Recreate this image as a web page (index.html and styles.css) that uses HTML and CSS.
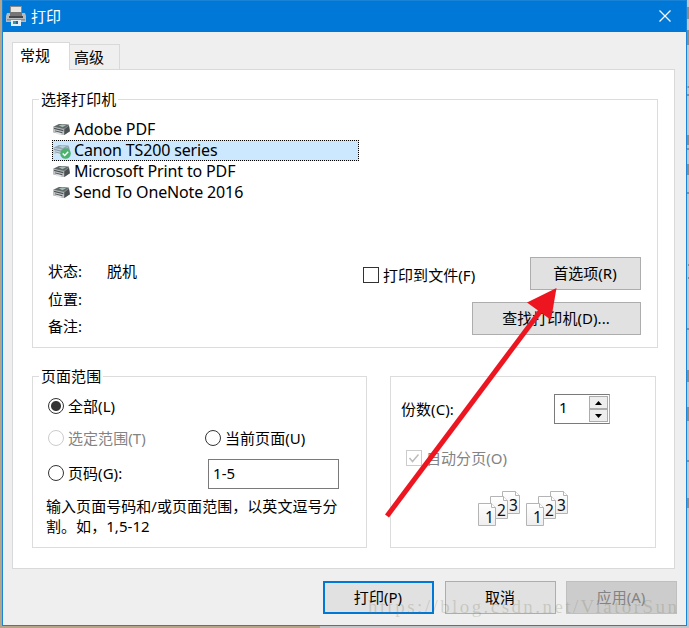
FILE: index.html
```html
<!DOCTYPE html>
<html lang="zh-CN">
<head>
<meta charset="utf-8">
<title>打印</title>
<link rel="stylesheet" href="styles.css">
</head>
<body>
<svg width="0" height="0" class="defs" aria-hidden="true">
  <defs>
    <linearGradient id="paper" x1="0" y1="0" x2="0" y2="1"><stop offset="0" stop-color="#fff"/><stop offset="1" stop-color="#eee"/></linearGradient>
    <symbol id="printer" viewBox="0 0 18 14">
      <path d="M0 4 6 1l11 1 1 7-6 4-8-2-4-1z" fill="#8b9193"/>
      <path d="m1 4 6-3 10 1-5 4z" fill="#5f6768"/>
      <path d="m6 2.500 4-1 4 1-4 2z" fill="#a5bdb0"/>
      <path d="m0 4 12 3v6l-5-1-3-1-4-1z" fill="#c0c4c6"/>
      <path d="m12 7 5-4 1 6-6 4z" fill="#4b5153"/>
      <path d="m1 5 10 2.500V9L1 6.500zM2 8l8 2v1L2 9z" fill="#4b5053"/>
      <path d="m3 10 6 1-1 2-5-1.500z" fill="#e4e6e7"/>
    </symbol>
    <symbol id="sheets" viewBox="0 0 44 38">
      <g fill="url(#paper)" stroke="#b4b4b4">
        <path d="M24.500 1.500h13l4 4v18h-17z"/><path d="M37.500 1.500v4h4" fill="#fff"/>
        <path d="M12.500 6.500h13l4 4v18h-17z"/><path d="M25.500 6.500v4h4" fill="#fff"/>
        <path d="M.5 13.500h13l4 4v18H.5z"/><path d="M13.500 13.500v4h4" fill="#fff"/>
      </g>
      <g class="sheet-no"><text x="7" y="33">1</text><text x="19" y="26">2</text><text x="31" y="21">3</text></g>
    </symbol>
  </defs>
</svg>
<main class="window">
  <header class="titlebar">
    <svg class="app-icon" width="20" height="20" viewBox="0 0 20 20">
      <path d="M4 0h12v7H4z" fill="#8a8a8a"/><path d="M5 1h10v6H5z" fill="#e9e6e1"/>
      <path d="M1 7h3v2h12V7h3l1 3v6H0v-6z" fill="#b8bbbd"/>
      <path d="M4 6h12v4H4z" fill="#757575"/><path d="M3 10h14v2H3z" fill="#45484b"/>
      <path d="M1 13h18v1.500H1z" fill="#8d9093"/>
      <path d="M5 14h10v6H5z" fill="#e7eef1"/><path d="M7 15h3v3H7z" fill="#2e9d9d"/><path d="M10 15h2v3h-2z" fill="#345e9a"/>
    </svg>
    <span class="title">打印</span>
    <svg class="close" width="12" height="12" viewBox="0 0 12 12"><path d="m.5.5 11 11m0-11-11 11" stroke="#fff" stroke-width="1.200"/></svg>
  </header>
  <nav class="tabs"><span class="tab active">常规</span><span class="tab">高级</span></nav>
  <section class="panel">
    <fieldset class="printers">
      <legend>选择打印机</legend>
      <ul class="list">
        <li><svg class="p-icon"><use href="#printer"/></svg><span>Adobe PDF</span></li>
        <li class="selected"><svg class="p-icon offline"><use href="#printer"/></svg><svg class="badge" width="11" height="11" viewBox="0 0 11 11"><circle cx="5.500" cy="5.500" r="5.300" fill="#4cb36c"/><path d="m2.700 5.500 2 2 3.500-3.800" fill="none" stroke="#fff" stroke-width="1.400"/></svg><span>Canon TS200 series</span></li>
        <li><svg class="p-icon"><use href="#printer"/></svg><span>Microsoft Print to PDF</span></li>
        <li><svg class="p-icon"><use href="#printer"/></svg><span>Send To OneNote 2016</span></li>
      </ul>
      <div class="details">
        <dl class="status"><dt>状态:</dt><dd>脱机</dd><dt>位置:</dt><dd></dd><dt>备注:</dt><dd></dd></dl>
        <div class="actions">
          <div class="action-row"><span class="check"></span><span class="to-file">打印到文件(F)</span><button class="btn">首选项(R)</button></div>
          <button class="btn find">查找打印机(D)...</button>
        </div>
      </div>
    </fieldset>
    <div class="bottom">
      <fieldset class="range">
        <legend>页面范围</legend>
        <div class="opt first"><i class="radio on"></i><span>全部(L)</span></div>
        <div class="opt second"><span class="choice disabled"><i class="radio"></i>选定范围(T)</span><i class="radio"></i><span>当前页面(U)</span></div>
        <div class="opt third"><span class="choice"><i class="radio"></i>页码(G):</span><span class="field">1-5</span></div>
        <p class="help">输入页面号码和/或页面范围，以英文逗号分<br>割。如，1,5-12</p>
      </fieldset>
      <fieldset class="copies">
        <div class="count"><span>份数(C):</span><div class="spinner"><span class="num">1</span><span class="steps"><i><svg width="7" height="4"><path d="M0 4 3.500 0 7 4z"/></svg></i><i><svg width="7" height="4"><path d="M0 0h7L3.500 4z"/></svg></i></span></div></div>
        <div class="collate"><span class="check"><svg width="14" height="14"><path d="m2.500 7 3 3.500 6-7" fill="none" stroke="#bcbcbc" stroke-width="1.500"/></svg></span><span>自动分页(O)</span></div>
        <div class="stacks"><svg width="44" height="38"><use href="#sheets"/></svg><svg width="44" height="38"><use href="#sheets"/></svg></div>
      </fieldset>
    </div>
  </section>
  <footer class="footer"><button class="btn primary">打印(P)</button><button class="btn">取消</button><button class="btn off">应用(A)</button></footer>
</main>
<svg class="overlay" width="689" height="628" viewBox="0 0 689 628">
  <path d="M387 516 542 309" stroke="#ed1620" stroke-width="5"/>
  <path d="m556.500 288-29.500 14.500 24 17.500z" fill="#ed1620"/>
  <text class="mark" x="368" y="613" textLength="309">https://blog.csdn.net/ViatorSun</text>
  <path d="M688 7v12M688 30v15M687.500 87h1.500M688 94v2M688 135v10M687 149h2M688 164v11M687 193h2M688 265h1M688 278h1M687 329h2M688 370v12M688 407v14M687 461h2M688 498v10" stroke="#555" fill="none"/>
</svg>
</body>
</html>
```

FILE: styles.css
```css
* { box-sizing: border-box; }
body {
  margin: 0;
  width: 689px;
  height: 628px;
  overflow: hidden;
  position: relative;
  background: linear-gradient(90deg, #b6a58b 320px, #c3c5c8 320px);
  color: #000;
  font: 15px/20px "Noto Sans", "Noto Sans CJK SC", sans-serif;
  letter-spacing: .05px;
  white-space: nowrap;
}
.defs { position: absolute; }
.window {
  width: 685px;
  height: 626px;
  margin-left: 2px;
  border: 1px solid #1883d7;
  background: #efefef;
}
.titlebar {
  display: flex;
  align-items: center;
  height: 31px;
  padding: 0 15px 2px 3px;
  background: #0078d7;
  color: #fff;
}
.app-icon { margin-top: 1px; }
.title { margin: 1px 0 0 5px; }
.close { margin-left: auto; }
.tabs {
  display: flex;
  align-items: flex-end;
  height: 37px;
  margin-left: 9px;
}
.tab {
  width: 50px;
  height: 25px;
  padding: 2px 0 0 4px;
  border: 1px solid #d9d9d9;
  border-width: 1px 1px 0 0;
}
.tab.active {
  z-index: 1;
  width: 58px;
  height: 28px;
  margin-bottom: -1px;
  padding: 2px 0 0 7px;
  border-left-width: 1px;
  background: #fff;
}
.panel {
  width: 663px;
  height: 500px;
  margin-left: 9px;
  padding: 20px 0 0 19px;
  border: 1px solid #d9d9d9;
  background: #fff;
}
fieldset { margin: 0; padding: 0; border: 1px solid #dcdcdc; min-width: 0; }
legend { height: 19px; margin-left: 6px; padding: 0 2px; line-height: 18px; }
.printers { width: 626px; height: 258px; }
.list { list-style: none; margin: 10px 0 0 19px; padding: 0; width: 307px; }
.list li {
  position: relative;
  display: flex;
  align-items: center;
  height: 21px;
  padding-left: 1px;
}
.list li span { margin: 0 0 0 4px; font-size: 16px; line-height: 19px; letter-spacing: -.15px; }
.list .selected { background: #cce8ff; outline: 1px dotted #000; outline-offset: -1px; }
.p-icon { width: 17px; height: 13px; margin-bottom: 1px; }
.offline { opacity: .5; }
.badge { position: absolute; left: 8px; top: 8px; }
.details { display: flex; justify-content: space-between; margin-top: 54px; padding: 0 16px 0 15px; }
.status {
  display: grid;
  grid-template-columns: 59px 60px;
  grid-template-rows: 20px 20px 20px;
  row-gap: 7.5px;
  margin: 4px 0 0;
}
.status dd { margin: 0; }
.actions { display: flex; flex-direction: column; align-items: flex-end; gap: 12px; }
.action-row { display: flex; align-items: center; }
.check { flex: none; width: 16px; height: 16px; border: 1px solid #333; background: #fff; margin-top: 3px; }
.to-file { width: 147px; margin: 3px 0 0 4px; }
.btn {
  flex: none;
  width: 111px;
  height: 33px;
  padding: 0 1px 2px 0;
  border: 1px solid #adadad;
  background: #e1e1e1;
  color: #000;
  font: inherit;
  letter-spacing: inherit;
}
.find { width: 169px; }
.bottom { display: flex; margin-top: 19px; }
.range { width: 335px; height: 181px; }
.opt { display: flex; align-items: center; height: 20px; padding-left: 15px; }
.radio {
  flex: none;
  width: 16px;
  height: 16px;
  margin-right: 4px;
  border: 1px solid #333;
  border-radius: 50%;
  background: #fff;
}
.radio.on { background: radial-gradient(circle, #333 4.500px, #fff 5.500px); }
.choice { display: flex; align-items: center; width: 157px; }
.disabled { color: #838383; }
.disabled .radio { border-color: #ccc; }
.first { margin-top: 10px; }
.second { margin-top: 12px; }
.third { height: 30px; margin-top: 11px; }
.third .choice { width: 160px; margin-bottom: 2px; }
.field { width: 131px; height: 30px; padding: 3px 4px; border: 1px solid #7a7a7a; line-height: 20px; }
.help { margin: 7px 0 0 13px; }
.copies { width: 266px; height: 172px; margin: 9px 0 0 23px; }
.count { display: flex; align-items: center; justify-content: space-between; margin: 17px 45px 0 10px; }
.spinner { display: flex; width: 56px; height: 30px; border: 1px solid #7a7a7a; border-right-color: #aaa; }
.num { width: 34px; padding: 2px 0 0 4px; }
.steps { display: flex; flex-direction: column; width: 19px; padding: 1px 0 0; }
.steps i {
  display: flex;
  align-items: center;
  justify-content: center;
  height: 13px;
  border: 1px solid #acacac;
  background: #eee;
}
.collate { display: flex; align-items: center; gap: 4px; height: 20px; margin: 24px 0 0 15px; color: #838383; }
.collate .check { display: flex; margin-top: 0; border-color: #ccc; }
.stacks { display: flex; gap: 4px; margin: 22px 0 0 87px; }
.sheet-no { font: 15.5px "Noto Sans", sans-serif; fill: #111; }
.footer { display: flex; justify-content: flex-end; gap: 11px; margin: 12px 9px 0 0; }
.primary { border: 2px solid #0078d7; }
.off { margin-left: -1px; border-color: #bfbfbf; background: #ccc; color: #838383; }
.overlay { position: absolute; left: 0; top: 0; z-index: 2; }
.mark { font: 19px "Liberation Serif", serif; fill: #77775f; fill-opacity: .25; }
```
